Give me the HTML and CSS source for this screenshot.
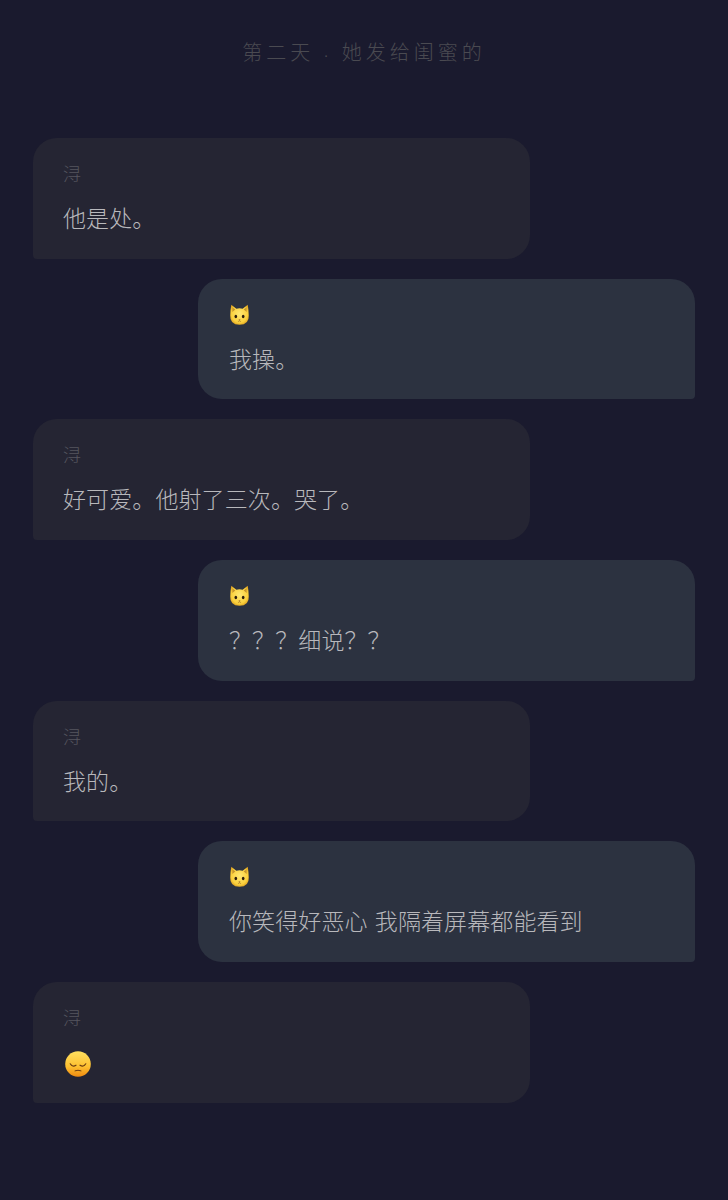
FILE: index.html
```html
<!DOCTYPE html>
<html lang="zh-CN">
<head>
    <meta charset="UTF-8">
    <meta name="viewport" content="width=device-width, initial-scale=1.0">
    <title>第二天</title>
    <link rel="stylesheet" href="styles.css">
</head>
<body>
    <svg class="defs" width="0" height="0" aria-hidden="true">
        <defs>
            <radialGradient id="catFur" cx="50%" cy="45%" r="62%">
                <stop offset="0%" stop-color="#ffe873"/>
                <stop offset="70%" stop-color="#fbd03c"/>
                <stop offset="100%" stop-color="#d4941a"/>
            </radialGradient>
            <linearGradient id="faceSkin" x1="0" y1="0" x2="0" y2="1">
                <stop offset="0%" stop-color="#ffe060"/>
                <stop offset="60%" stop-color="#fdc030"/>
                <stop offset="100%" stop-color="#f08a10"/>
            </linearGradient>
            <symbol id="cat" viewBox="0 0 24 24">
                <path d="M2.6 .4 L8.4 4.8 Q12 4 15.6 4.8 L21.4 .4 Q22.6 7 22.6 12.6 Q23.2 23 12 23.2 Q.8 23 1.4 12.6 Q1.4 7 2.6 .4 Z" fill="url(#catFur)"/>
                <path d="M3.8 3 L7.2 5.8 L3.8 8.6 Z M20.2 3 L16.8 5.8 L20.2 8.6 Z" fill="#c8962c"/>
                <ellipse cx="7.8" cy="13.6" rx="1.5" ry="2" fill="#2c1d0c"/>
                <ellipse cx="16.2" cy="13.6" rx="1.5" ry="2" fill="#2c1d0c"/>
                <path d="M10.8 17 h2.4 L12 18.4 Z" fill="#8a4a1e"/>
                <path d="M10.2 19 Q11.2 19.8 12 18.6 Q12.8 19.8 13.8 19" fill="none" stroke="#7a4a1e" stroke-width=".6"/>
            </symbol>
            <symbol id="pensive" viewBox="0 0 26 26">
                <circle cx="13" cy="13" r="12.8" fill="url(#faceSkin)"/>
                <path d="M5.2 12.8 Q7.6 16.6 11 14.2" fill="none" stroke="#6b3d12" stroke-width="1.1" stroke-linecap="round"/>
                <path d="M20.8 12.8 Q18.4 16.6 15 14.2" fill="none" stroke="#6b3d12" stroke-width="1.1" stroke-linecap="round"/>
                <path d="M10 19.8 Q13 18.6 16 19.8" fill="none" stroke="#6b3d12" stroke-width="1" stroke-linecap="round"/>
            </symbol>
        </defs>
    </svg>

    <h1 class="day-title">第二天 <span class="dot">·</span> 她发给闺蜜的</h1>

    <div class="chat">
        <div class="bubble left">
            <div class="sender">浔</div>
            <div class="msg">他是处。</div>
        </div>
        <div class="bubble right">
            <div class="sender"><svg class="cat-icon"><use href="#cat"/></svg></div>
            <div class="msg">我操。</div>
        </div>
        <div class="bubble left">
            <div class="sender">浔</div>
            <div class="msg">好可爱。他射了三次。哭了。</div>
        </div>
        <div class="bubble right">
            <div class="sender"><svg class="cat-icon"><use href="#cat"/></svg></div>
            <div class="msg">？？？细说？？</div>
        </div>
        <div class="bubble left">
            <div class="sender">浔</div>
            <div class="msg">我的。</div>
        </div>
        <div class="bubble right">
            <div class="sender"><svg class="cat-icon"><use href="#cat"/></svg></div>
            <div class="msg">你笑得好恶心 我隔着屏幕都能看到</div>
        </div>
        <div class="bubble left">
            <div class="sender">浔</div>
            <div class="msg"><svg class="face-icon"><use href="#pensive"/></svg></div>
        </div>
    </div>
</body>
</html>
```

FILE: styles.css
```css
body {
    margin: 0;
    min-height: 1200px;
    background-color: #1a1a2e;
    font-family: "Noto Sans CJK SC", "Liberation Sans", sans-serif;
    font-weight: 300;
}
.defs {
    position: absolute;
}
.day-title {
    margin: 0;
    padding-top: 38px;
    height: 138px;
    box-sizing: border-box;
    text-align: center;
    font-size: 20px;
    line-height: 28px;
    font-weight: 300;
    letter-spacing: 4px;
    color: #4a4a51;
}
.dot {
    padding: 0 1px;
    font-family: "Liberation Sans", sans-serif;
    font-size: 14px;
}
.chat {
    display: flex;
    flex-direction: column;
    gap: 20px;
    padding: 0 33px;
}
.bubble {
    width: 497px;
    height: 120.67px;
    box-sizing: border-box;
    padding: 22px 30px 0;
}
.left {
    align-self: flex-start;
    background-color: #252533;
    border-radius: 24px 24px 24px 4px;
}
.right {
    align-self: flex-end;
    padding-left: 31px;
    background-color: #2c3240;
    border-radius: 24px 24px 4px 24px;
}
.sender {
    height: 28px;
    font-size: 18px;
    line-height: 26px;
    color: #55555f;
}
.msg {
    margin-top: 9px;
    height: 40px;
    font-size: 23px;
    line-height: 40px;
    letter-spacing: .1px;
    word-spacing: 2px;
    color: #b8b8bc;
}
.cat-icon {
    display: block;
    width: 21px;
    height: 22px;
    padding-top: 3px;
}
.face-icon {
    display: block;
    width: 26px;
    height: 26px;
    padding-top: 10px;
    padding-left: 2px;
}
```
